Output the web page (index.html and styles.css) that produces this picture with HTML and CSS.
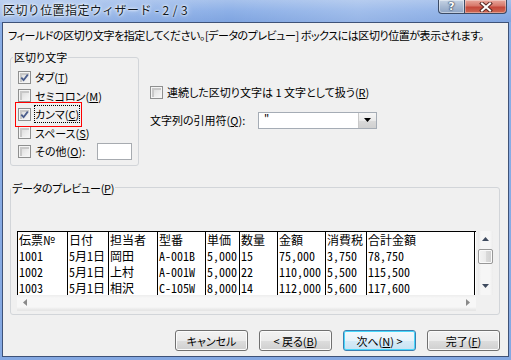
FILE: index.html
```html
<!DOCTYPE html>
<html lang="ja">
<head>
<meta charset="utf-8">
<title>区切り位置指定ウィザード</title>
<link rel="stylesheet" href="styles.css">
</head>
<body>
<div class="window">
  <div class="titlebar">
    <span class="title">区切り位置指定ウィザード - 2 / 3</span>
    <div class="caption-buttons">
      <span class="cap-btn help">?</span>
      <span class="cap-btn close"><svg width="14" height="10" viewBox="0 0 14 10"><path d="M3 1.5 11 8.5M11 1.5 3 8.5" stroke="#5a2a25" stroke-width="4" stroke-linecap="square" fill="none"/><path d="M3 1.5 11 8.5M11 1.5 3 8.5" stroke="#fff" stroke-width="2" stroke-linecap="square" fill="none"/></svg></span>
    </div>
  </div>
  <div class="client">
    <p class="desc">フィールドの区切り文字を指定してください。[データのプレビュー] ボックスには区切り位置が表示されます。</p>
    <div class="options">
      <fieldset class="group delim">
        <legend>区切り文字</legend>
        <div class="check-row"><span class="cb"><svg width="9" height="9" viewBox="0 0 9 9"><path d="M1.3 4.6 3.6 7.2 7.8 1.6" stroke="#4a5d8c" stroke-width="1.8" fill="none"/></svg></span><span>タブ(<u>T</u>)</span></div>
        <div class="check-row"><span class="cb"></span><span>セミコロン(<u>M</u>)</span></div>
        <div class="check-row marked"><span class="cb"><svg width="9" height="9" viewBox="0 0 9 9"><path d="M1.3 4.6 3.6 7.2 7.8 1.6" stroke="#4a5d8c" stroke-width="1.8" fill="none"/></svg></span><span class="focus">カンマ(<u>C</u>)</span></div>
        <div class="check-row"><span class="cb"></span><span>スペース(<u>S</u>)</span></div>
        <div class="check-row other"><span class="cb"></span><span>その他(<u>O</u>):</span><span class="textbox"></span></div>
      </fieldset>
      <div class="right-opts">
        <div class="check-row"><span class="cb"></span><span>連続した区切り文字は 1 文字として扱う(<u>R</u>)</span></div>
        <div class="quote-row">
          <span class="quote-label">文字列の引用符(<u>Q</u>):</span>
          <div class="combo">
            <span class="combo-val">"</span>
            <span class="combo-btn"><svg width="7" height="4" viewBox="0 0 7 4"><path d="M0 0H7L3.5 4Z" fill="#000"/></svg></span>
          </div>
        </div>
      </div>
    </div>
    <fieldset class="group preview">
      <legend>データのプレビュー(<u>P</u>)</legend>
      <div class="preview-box">
        <div class="grid-area">
          <div class="data-view">
            <div class="data-grid">
              <span class="h">伝票№</span><span class="h">日付</span><span class="h">担当者</span><span class="h">型番</span><span class="h">単価</span><span class="h">数量</span><span class="h">金額</span><span class="h">消費税</span><span class="h">合計金額</span>
              <span>1001</span><span>5月1日</span><span>岡田</span><span>A-001B</span><span>5,000</span><span>15</span><span>75,000</span><span>3,750</span><span>78,750</span>
              <span>1002</span><span>5月1日</span><span>上村</span><span>A-001W</span><span>5,000</span><span>22</span><span>110,000</span><span>5,500</span><span>115,500</span>
              <span>1003</span><span>5月1日</span><span>相沢</span><span>C-105W</span><span>8,000</span><span>14</span><span>112,000</span><span>5,600</span><span>117,600</span>
            </div>
          </div>
          <div class="vscroll">
            <span class="arrow-v"><svg width="7" height="4" viewBox="0 0 7 4"><path d="M0 4H7L3.5 0Z" fill="#3e4a5e"/></svg></span>
            <span class="thumb"></span>
            <span class="arrow-v bottom"><svg width="7" height="4" viewBox="0 0 7 4"><path d="M0 0H7L3.5 4Z" fill="#3e4a5e"/></svg></span>
          </div>
        </div>
        <div class="hscroll">
          <svg width="4" height="7" viewBox="0 0 4 7"><path d="M4 0V7L0 3.5Z" fill="#8a8a8a"/></svg>
          <svg width="4" height="7" viewBox="0 0 4 7"><path d="M0 0V7L4 3.5Z" fill="#8a8a8a"/></svg>
        </div>
      </div>
    </fieldset>
    <div class="buttons">
      <button class="btn">キャンセル</button>
      <button class="btn">&lt; 戻る(<u>B</u>)</button>
      <button class="btn default">次へ(<u>N</u>) &gt;</button>
      <button class="btn">完了(<u>F</u>)</button>
    </div>
  </div>
</div>
</body>
</html>
```

FILE: styles.css
```css
* { box-sizing: border-box; }
html, body { margin: 0; padding: 0; }
body {
  width: 511px;
  height: 360px;
  overflow: hidden;
  font-family: "Noto Sans CJK JP", sans-serif;
  font-size: 11px;
  color: #000;
  font-feature-settings: "palt";
}
u { text-decoration: underline; text-underline-offset: 1px; }

.window {
  width: 511px;
  height: 360px;
  display: flex;
  flex-direction: column;
  padding: 0 2px 3px 2px;
  background: linear-gradient(180deg, #a9c4ed 0, #8aaee6 22px, #84a8e2 100%);
}

.titlebar {
  height: 22px;
  margin: 0 -2px;
  padding: 0 4px 0 3px;
  display: flex;
  justify-content: space-between;
  align-items: flex-start;
  background:
    linear-gradient(90deg, rgba(255,255,255,0.25) 0, rgba(255,255,255,0) 45%, rgba(255,255,255,0.18) 70%, rgba(255,255,255,0) 100%),
    linear-gradient(180deg, #a6c1ec 0%, #8db0e7 50%, #7fa4e0 100%);
}
.title {
  font-size: 12px;
  line-height: 20px;
  letter-spacing: 0.4px;
  font-feature-settings: normal;
  color: #101820;
  text-shadow: 0 0 6px #fff, 0 0 3px #fff, 0 0 2px #e8f0ff;
}
.caption-buttons { display: flex; }
.cap-btn {
  height: 14px;
  border: 1px solid #3b4b66;
  border-top: 0;
  display: flex;
  align-items: center;
  justify-content: center;
}
.help {
  width: 26px;
  border-right: 0;
  border-radius: 0 0 0 4px;
  background: linear-gradient(180deg, #c6d3e4 0%, #a7b9d2 50%, #8ea4c4 100%);
  box-shadow: inset 0 0 0 1px rgba(255,255,255,0.45);
  color: #fff;
  font: bold 11px/13px "DejaVu Sans", sans-serif;
  text-shadow: 0 0 1px #2f3d55, 0 0 1px #2f3d55, 0 0 2px #2f3d55;
}
.close {
  width: 43px;
  border-radius: 0 0 4px 0;
  background: linear-gradient(180deg, #e8a89d 0%, #d7776a 45%, #c4473a 55%, #cf6b55 100%);
  box-shadow: inset 0 0 0 1px rgba(255,255,255,0.35);
}

.client {
  flex: 1;
  background: #f0f0f0;
  border: 1px solid #3e5278;
  padding: 0 8px 5px 5px;
  display: flex;
  flex-direction: column;
}

.desc {
  margin: 5px 0 0 0;
  line-height: 14px;
  letter-spacing: -0.45px;
  white-space: nowrap;
}

.options {
  display: flex;
  align-items: flex-start;
  margin-top: 8px;
}

.group {
  margin: 0;
  border: 1px solid #d2d5d9;
  border-radius: 3px;
  min-width: 0;
}
.group legend {
  padding: 0 1px;
  line-height: 14px;
}

.delim {
  width: 129px;
  margin-left: 2px;
  padding: 4px 0 4px 7px;
}
.delim legend { margin-left: -5px; }

.check-row {
  display: flex;
  align-items: center;
  height: 18.5px;
  white-space: nowrap;
  width: max-content;
}
.cb {
  width: 13px;
  height: 13px;
  flex-shrink: 0;
  margin-right: 4px;
  border: 1px solid #8e8f8f;
  background: linear-gradient(135deg, #d3d3d3 0%, #ececec 60%, #f8f8f8 100%);
  box-shadow: inset 0 0 0 1px #f4f4f4, inset 1px 1px 0 2px #c8c8c8;
  display: flex;
  align-items: center;
  justify-content: center;
}
.marked { outline: 1px solid #ff0000; outline-offset: 2px; }
.focus { outline: 1px dotted #000; outline-offset: 0; }
.other { width: 114px; }
.textbox {
  margin-left: auto;
  width: 35px;
  height: 17px;
  background: #fff;
  border: 1px solid #a7abb0;
}

.right-opts {
  margin-left: 11px;
  margin-top: 33px;
  display: flex;
  flex-direction: column;
}
.quote-row {
  display: flex;
  align-items: center;
  margin-top: 10px;
  height: 17px;
}
.quote-label { width: 108px; white-space: nowrap; }
.combo {
  width: 119px;
  height: 17px;
  background: #fff;
  border: 1px solid #a5acb5;
  display: flex;
  justify-content: space-between;
}
.combo-val { padding-left: 5px; line-height: 13px; }
.combo-btn {
  width: 18px;
  height: 15px;
  border-left: 1px solid #c9c9c9;
  background: linear-gradient(180deg, #f6f6f6 0%, #e9e9e9 50%, #dadada 51%, #d0d0d0 100%);
  display: flex;
  align-items: center;
  justify-content: center;
}

.preview {
  margin: 15px 0 0 2px;
  width: 490px;
  padding: 36px 6px 3px 6px;
}
.preview legend { margin-left: -6px; letter-spacing: -0.3px; }

.preview-box { display: flex; flex-direction: column; }
.grid-area { display: flex; gap: 2px; height: 64px; }
.data-view {
  width: 459px;
  height: 64px;
  overflow: hidden;
  background: #fff;
  border-top: 1px solid #000;
}
.data-grid {
  display: grid;
  grid-template-columns: 50px 41px 49px 48px 34px 38px 48px 41px 109px;
  grid-auto-rows: 16px;
  width: 459px;
  font-size: 12px;
}
.data-grid span {
  border-left: 1px solid #000;
  padding-left: 1px;
  line-height: 16px;
  white-space: nowrap;
  overflow: hidden;
  font-feature-settings: "hwid";
}
.data-grid span:nth-child(9n) { border-right: 1px solid #000; }
.data-grid span.h { font-feature-settings: normal; }

.vscroll {
  width: 15px;
  height: 64px;
  background: linear-gradient(90deg, #e9e9e9 0, #f6f6f6 3px, #f6f6f6 12px, #ececec 15px);
  display: flex;
  flex-direction: column;
  align-items: center;
}
.arrow-v { height: 17px; display: flex; align-items: center; justify-content: center; }
.arrow-v.bottom { margin-top: auto; }
.thumb {
  margin-top: 1px;
  width: 15px;
  height: 15px;
  border: 1px solid #979797;
  border-radius: 2px;
  background: linear-gradient(90deg, #f4f4f4 0%, #ebebeb 50%, #dbdbdb 51%, #cfcfcf 100%);
  box-shadow: inset 0 0 0 1px #fafafa;
}

.hscroll {
  width: 459px;
  height: 16px;
  background: linear-gradient(180deg, #ededed 0, #f7f7f7 3px, #f7f7f7 12px, #e6e6e6 15px);
  display: flex;
  align-items: center;
  justify-content: space-between;
  padding: 0 6px;
}

.buttons {
  margin-top: auto;
  display: flex;
  justify-content: flex-end;
  gap: 11px;
}
.btn {
  width: 73px;
  height: 21px;
  padding: 0;
  border: 1px solid #707070;
  border-radius: 3px;
  background: linear-gradient(180deg, #f2f2f2 0%, #ebebeb 50%, #dddddd 51%, #cfcfcf 100%);
  box-shadow: inset 0 0 0 1px #fbfbfb;
  font-family: "Noto Sans CJK JP", sans-serif;
  font-size: 11px;
  line-height: 18px;
  color: #000;
  font-feature-settings: "palt";
}
.btn.default {
  border-color: #3c7fb1;
  background: linear-gradient(180deg, #f4f9fc 0%, #e8f3fa 50%, #d6ebf7 51%, #c8e2f3 100%);
  box-shadow: inset 0 0 0 1px #48d7fb;
}
```
